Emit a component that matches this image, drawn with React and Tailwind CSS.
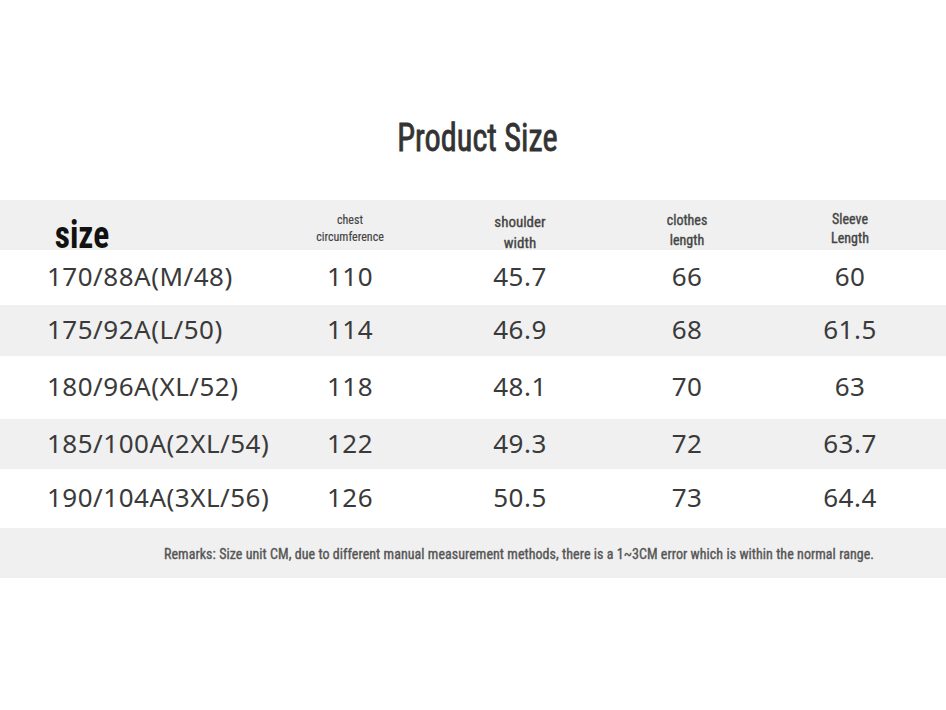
const rows = [
  { size: "170/88A(M/48)", chest: "110", shoulder: "45.7", length: "66", sleeve: "60", h: "h-[55px]", bg: "bg-white" },
  { size: "175/92A(L/50)", chest: "114", shoulder: "46.9", length: "68", sleeve: "61.5", h: "h-[51px]", bg: "bg-[#f0f0f0]" },
  { size: "180/96A(XL/52)", chest: "118", shoulder: "48.1", length: "70", sleeve: "63", h: "h-[63px]", bg: "bg-white" },
  { size: "185/100A(2XL/54)", chest: "122", shoulder: "49.3", length: "72", sleeve: "63.7", h: "h-[50px]", bg: "bg-[#f0f0f0]" },
  { size: "190/104A(3XL/56)", chest: "126", shoulder: "50.5", length: "73", sleeve: "64.4", h: "h-[59px]", bg: "bg-white" },
];

const grid = "grid grid-cols-[270px_160px_180px_154px_172px_10px]";

export default function App() {
  return (
    <div className="w-[946px] h-[710px] bg-white overflow-hidden">
      <div className="h-[200px] flex items-center justify-center pt-[76px] pl-[8px]">
        <h1 className="inline-block scale-x-[0.85] font-['Roboto_Condensed',sans-serif] font-normal text-[38px] leading-none text-[#333] [-webkit-text-stroke:0.8px_#333]">
          Product Size
        </h1>
      </div>

      <div className={`${grid} h-[50px] bg-[#f0f0f0] font-['Roboto_Condensed',sans-serif] font-normal text-[#444] [-webkit-text-stroke:0.35px_#444]`}>
        <div className="flex items-end pl-[51px]">
          <span className="inline-block scale-x-[0.88] font-bold text-[38px] leading-[38px] text-[#111] [-webkit-text-stroke:0px]">size</span>
        </div>
        <div className="flex flex-col items-center justify-center pt-[4px] text-[12px] leading-[17px] [-webkit-text-stroke:0.15px_#444]">
          <span>chest</span>
          <span>circumference</span>
        </div>
        <div className="flex flex-col items-center justify-center pt-[12px] text-[15px] leading-[21px]">
          <span>shoulder</span>
          <span>width</span>
        </div>
        <div className="flex flex-col items-center justify-center pt-[5px] text-[14px] leading-[20px]">
          <span>clothes</span>
          <span>length</span>
        </div>
        <div className="flex flex-col items-center justify-center pt-[4px] text-[14px] leading-[19px]">
          <span>Sleeve</span>
          <span>Length</span>
        </div>
        <div />
      </div>

      {rows.map((r) => (
        <div key={r.size} className={`${grid} ${r.h} ${r.bg} items-center pb-[3px] font-['Noto_Sans',sans-serif] text-[26px] leading-none text-[#3a3a3a] tracking-[0.5px]`}>
          <div className="pl-[47px] whitespace-nowrap">{r.size}</div>
          <div className="text-center">{r.chest}</div>
          <div className="text-center">{r.shoulder}</div>
          <div className="text-center">{r.length}</div>
          <div className="text-center">{r.sleeve}</div>
          <div />
        </div>
      ))}

      <div className="h-[50px] bg-[#f0f0f0] flex items-center pl-[164px] pt-[3px] font-['Roboto_Condensed',sans-serif] font-normal text-[14px] tracking-[0.05px] text-[#555] [-webkit-text-stroke:0.35px_#555]">
        Remarks: Size unit CM, due to different manual measurement methods, there is a 1~3CM error which is within the normal range.
      </div>
    </div>
  );
}
